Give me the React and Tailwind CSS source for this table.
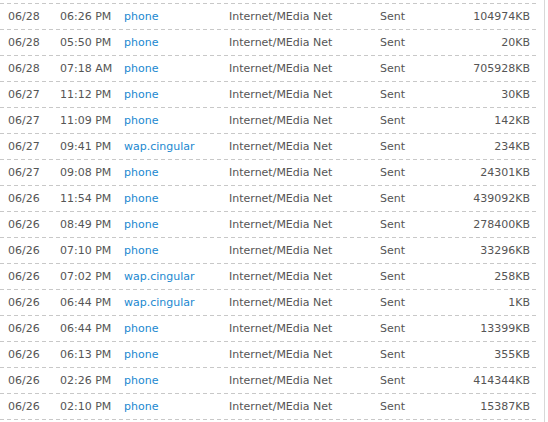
import React from "react";

const rows = [
  ["06/28", "06:26 PM", "phone", "104974KB"],
  ["06/28", "05:50 PM", "phone", "20KB"],
  ["06/28", "07:18 AM", "phone", "705928KB"],
  ["06/27", "11:12 PM", "phone", "30KB"],
  ["06/27", "11:09 PM", "phone", "142KB"],
  ["06/27", "09:41 PM", "wap.cingular", "234KB"],
  ["06/27", "09:08 PM", "phone", "24301KB"],
  ["06/26", "11:54 PM", "phone", "439092KB"],
  ["06/26", "08:49 PM", "phone", "278400KB"],
  ["06/26", "07:10 PM", "phone", "33296KB"],
  ["06/26", "07:02 PM", "wap.cingular", "258KB"],
  ["06/26", "06:44 PM", "wap.cingular", "1KB"],
  ["06/26", "06:44 PM", "phone", "13399KB"],
  ["06/26", "06:13 PM", "phone", "355KB"],
  ["06/26", "02:26 PM", "phone", "414344KB"],
  ["06/26", "02:10 PM", "phone", "15387KB"],
];

const dash =
  "h-px w-full bg-[repeating-linear-gradient(to_right,#c8c8c8_0px,#c8c8c8_4px,transparent_4px,transparent_7px)]";

export default function App() {
  return (
    <div
      className="w-[548px] h-[422px] bg-white overflow-hidden text-[11px] text-[#555555]"
      style={{ fontFamily: '"DejaVu Sans", Verdana, sans-serif' }}
    >
      <div className="w-[545px] h-full border-r border-[#d8d8d8] pt-[3px]">
        <div className="w-[536px]">
          <div className={dash} />
          {rows.map((r, i) => (
            <div key={i}>
              <div className="flex h-[25px] items-center pt-[2px]">
                <div className="w-[60px] pl-[8px]">{r[0]}</div>
                <div className="w-[64px]">{r[1]}</div>
                <div className="w-[105px] text-[#1a88d0]">{r[2]}</div>
                <div className="w-[151px]">Internet/MEdia Net</div>
                <div className="w-[60px]">Sent</div>
                <div className="flex-1 text-right pr-[6px]">{r[3]}</div>
              </div>
              <div className={dash} />
            </div>
          ))}
        </div>
      </div>
    </div>
  );
}
